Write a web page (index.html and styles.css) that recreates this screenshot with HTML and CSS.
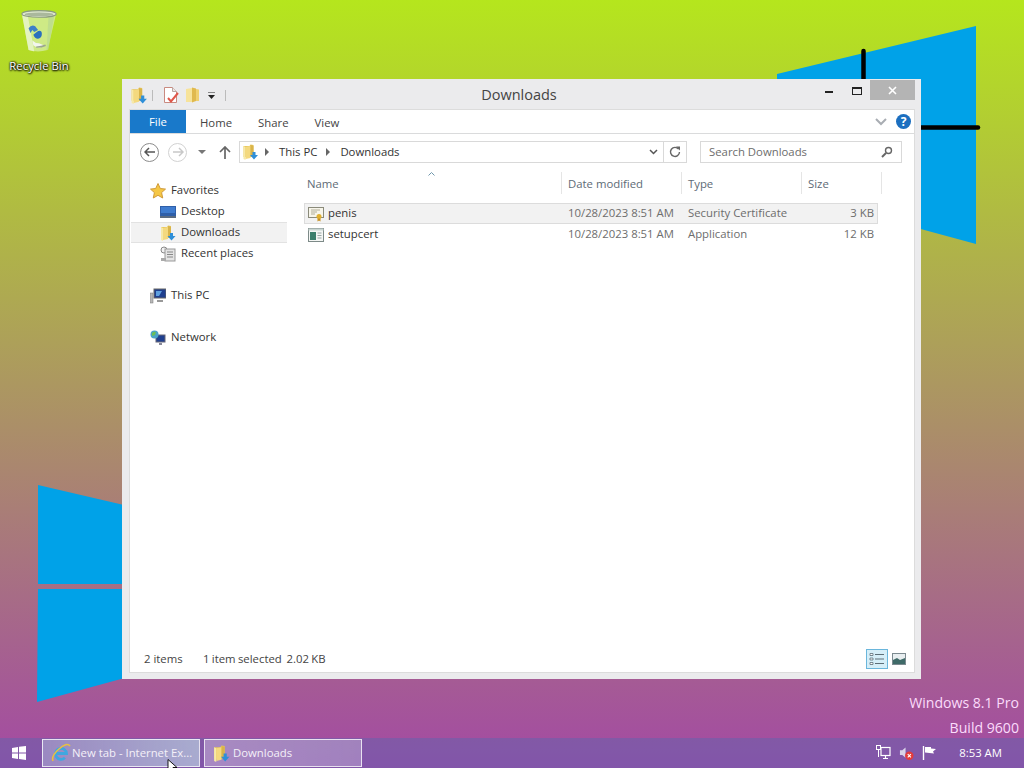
FILE: index.html
```html
<!DOCTYPE html>
<html lang="en">
<head>
    <meta charset="UTF-8">
    <title>Downloads</title>
    <link rel="stylesheet" href="styles.css">
</head>
<body>
    <!-- shared icons -->
    <svg class="defs" width="0" height="0">
        <symbol id="folder-dl" viewBox="0 0 16 18">
            <path d="M1 3h6l1-1.500 3 .5v12l-10 0z" fill="#e8c75c"/>
            <path d="M1 3v13l2 1V4z" fill="#f7e9a8"/>
            <path d="M3 4l5-1v12l-5 1z" fill="#f4d97f"/>
            <path d="M8 2l3 .7V13l-3 1z" fill="#d9b44a"/>
            <path d="M10 9h3v3h2.500l-4 4.500-4-4.500H10z" fill="#2f8fd8"/>
        </symbol>
        <symbol id="folder" viewBox="0 0 16 18">
            <path d="M1 3l6-1v14l-6 0z" fill="#f7e39a"/>
            <path d="M7 1.500l4 1V15l-4 1.500z" fill="#e0b94e"/>
            <path d="M11 3l3 .5V15l-3 0z" fill="#f0d070"/>
        </symbol>
    </svg>

    <div class="desktop">
        <svg class="wallpaper" width="1024" height="738">
            <polygon points="777,74 976,26 976,244 777,190" fill="#00a2e8"/>
            <polygon points="38,485 300,546 300,584 38,584" fill="#00a2e8"/>
            <polygon points="38,589 300,589 300,630 37,702" fill="#00a2e8"/>
            <line x1="863.500" y1="51" x2="863.500" y2="140" stroke="#000" stroke-width="4.500" stroke-linecap="round"/>
            <line x1="800" y1="127.500" x2="978" y2="127.500" stroke="#000" stroke-width="4.500" stroke-linecap="round"/>
        </svg>

        <div class="desk-icon">
            <svg width="38" height="44" viewBox="0 0 40 46">
                <path d="M2 5 9 43q10 3 20 0L38 5z" fill="#d8eeb0" fill-opacity=".7"/>
                <path d="M2 5 9 43q3 1 6 1.500L8 6z" fill="#eef7d8" fill-opacity=".7"/>
                <path d="M30 7 28 43q1 0 2-.5L36 7z" fill="#b8d890" fill-opacity=".7"/>
                <ellipse cx="20" cy="5" rx="18" ry="3.500" fill="#dfe8d0" stroke="#8b9a80" stroke-width="1.200"/>
                <ellipse cx="20" cy="5.500" rx="15" ry="2" fill="#aab89c"/>
                <path d="M9 20q3-4 7-2l3 4-4 2-2-2-2 3z" fill="#3d7fc8"/>
                <path d="M14 27l5-4q4-1 4 3t-3 5q-4 1-6-4z" fill="#2a6fbd"/>
                <path d="M13 33q3 3 7 3l5 2-3 2q-5 1-8-2z" fill="#f2f5ee"/>
                <path d="M17 40q6 0 10-2" stroke="#9aa690" stroke-width="1.500" fill="none"/>
            </svg>
            <span>Recycle Bin</span>
        </div>

        <div class="watermark">
            <div>Windows 8.1 Pro</div>
            <div>Build 9600</div>
        </div>

        <div class="window">
            <div class="titlebar">
                <div class="qat">
                    <svg width="18" height="19"><use href="#folder-dl"/></svg>
                    <span class="qat-sep"></span>
                    <svg width="16" height="18" viewBox="0 0 16 18">
                        <path d="M1.500 1.500h8l4 4v11h-12z" fill="#fff" stroke="#c98a80"/>
                        <path d="M9.500 1.500v4h4" fill="#e8e8e8" stroke="#b9a7a2"/>
                        <path d="M5 12l3 3.500L15 7" stroke="#e0574a" stroke-width="2" fill="none"/>
                    </svg>
                    <svg class="qat-folder" width="16" height="18"><use href="#folder"/></svg>
                    <svg class="qat-drop" width="9" height="8" viewBox="0 0 9 8">
                        <path d="M1 0h7" stroke="#222"/>
                        <path d="M1 3h7L4.500 7z" fill="#222"/>
                    </svg>
                    <span class="qat-sep"></span>
                </div>
                <div class="title">Downloads</div>
                <div class="winbtns">
                    <span class="btn-min"></span>
                    <span class="btn-max"></span>
                    <span class="btn-close">
                        <svg width="9" height="9" viewBox="0 0 9 9">
                            <path d="M1 1l7 7M8 1 1 8" stroke="#fff" stroke-width="1.600"/>
                        </svg>
                    </span>
                </div>
            </div>

            <div class="main">
                <div class="ribbon">
                    <div class="tab-file">File</div>
                    <div class="tab">Home</div>
                    <div class="tab">Share</div>
                    <div class="tab">View</div>
                    <div class="ribbon-end">
                        <svg width="12" height="8" viewBox="0 0 12 8">
                            <path d="M1 1l5 5 5-5" stroke="#a9adb3" stroke-width="2" fill="none"/>
                        </svg>
                        <span class="help">?</span>
                    </div>
                </div>

                <div class="navbar">
                    <span class="round-btn">
                        <svg width="12" height="10" viewBox="0 0 12 10">
                            <path d="M5 1 1 5l4 4M1 5h10" stroke="#555" stroke-width="1.500" fill="none"/>
                        </svg>
                    </span>
                    <span class="round-btn off">
                        <svg width="12" height="10" viewBox="0 0 12 10">
                            <path d="M7 1l4 4-4 4M11 5H1" stroke="#c8c8c8" stroke-width="1.500" fill="none"/>
                        </svg>
                    </span>
                    <svg class="nav-drop" width="8" height="4" viewBox="0 0 8 4">
                        <path d="M0 0h8L4 4z" fill="#777"/>
                    </svg>
                    <svg class="nav-up" width="12" height="13" viewBox="0 0 12 13">
                        <path d="M1 6l5-5 5 5M6 1v12" stroke="#666" stroke-width="1.700" fill="none"/>
                    </svg>
                    <div class="address">
                        <svg class="addr-icon" width="17" height="18"><use href="#folder-dl"/></svg>
                        <span class="crumb-arrow"></span>
                        <span class="crumb">This PC</span>
                        <span class="crumb-arrow"></span>
                        <span class="crumb">Downloads</span>
                        <svg class="addr-chev" width="9" height="6" viewBox="0 0 9 6">
                            <path d="M1 1l3.500 3.500L8 1" stroke="#555" stroke-width="1.500" fill="none"/>
                        </svg>
                        <span class="addr-refresh">
                            <svg width="12" height="12" viewBox="0 0 12 12">
                                <path d="M9.600 3.200A4.500 4.500 0 1 0 10.500 6" stroke="#666" stroke-width="1.400" fill="none"/>
                                <path d="M7 .5h4v4z" fill="#666"/>
                            </svg>
                        </span>
                    </div>
                    <div class="search">
                        <span>Search Downloads</span>
                        <svg width="12" height="12" viewBox="0 0 12 12">
                            <circle cx="7.500" cy="4.500" r="3" stroke="#666" stroke-width="1.400" fill="none"/>
                            <path d="M5 7l-4 4" stroke="#666" stroke-width="2"/>
                        </svg>
                    </div>
                </div>

                <div class="panes">
                    <div class="tree">
                        <div class="tree-row top">
                            <svg width="16" height="16" viewBox="0 0 16 16">
                                <path d="M8 .5l2.300 5 5.200.6-3.900 3.500 1.100 5.400L8 12.300 3.300 15l1.100-5.400L.5 6.100l5.200-.6z" fill="#f5c745" stroke="#d09a3a"/>
                            </svg>
                            <span>Favorites</span>
                        </div>
                        <div class="tree-row sub">
                            <svg width="16" height="14" viewBox="0 0 16 14">
                                <rect x="0" y="1" width="16" height="10" fill="#2f5fa8"/>
                                <rect x="1" y="2" width="14" height="6" fill="#3f7ccf"/>
                                <rect x="0" y="11" width="16" height="2" fill="#5b6b80"/>
                            </svg>
                            <span>Desktop</span>
                        </div>
                        <div class="tree-row sub selected">
                            <svg width="16" height="18"><use href="#folder-dl"/></svg>
                            <span>Downloads</span>
                        </div>
                        <div class="tree-row sub">
                            <svg width="16" height="16" viewBox="0 0 16 16">
                                <circle cx="4" cy="4" r="3" fill="#f1f1f1" stroke="#888"/>
                                <rect x="5" y="3" width="10" height="12" fill="#e4e4e4" stroke="#999"/>
                                <path d="M7 6h6M7 8.500h6M7 11h6" stroke="#888"/>
                                <rect x="1" y="12" width="5" height="3" fill="#aaa"/>
                            </svg>
                            <span>Recent places</span>
                        </div>
                        <div class="tree-row top gap">
                            <svg width="16" height="16" viewBox="0 0 16 16">
                                <rect x="4" y="1" width="12" height="9" fill="#1f3f8f" stroke="#666"/>
                                <path d="M6 3h6l-3 5H6z" fill="#5fa0e0"/>
                                <rect x="0" y="5" width="3" height="10" fill="#b8b8b8" stroke="#777" stroke-width=".5"/>
                                <path d="M7 12h6v2H7z" fill="#999"/>
                            </svg>
                            <span>This PC</span>
                        </div>
                        <div class="tree-row top gap">
                            <svg width="16" height="16" viewBox="0 0 16 16">
                                <rect x="6" y="5" width="9" height="7" fill="#1f3f8f" stroke="#667"/>
                                <circle cx="4.500" cy="4.500" r="4" fill="#4aa3c8"/>
                                <path d="M2 3q2-2 4-1l-1 3-3 1z" fill="#6bbf59"/>
                                <path d="M9 13h3v2H9z" fill="#889"/>
                            </svg>
                            <span>Network</span>
                        </div>
                    </div>

                    <div class="files">
                        <svg class="sort-arrow" width="7" height="4" viewBox="0 0 7 4">
                            <path d="M.5 3.500l3-3 3 3" stroke="#6f97ad" fill="none"/>
                        </svg>
                        <div class="file-head">
                            <div class="col-name">Name</div>
                            <div>Date modified</div>
                            <div>Type</div>
                            <div>Size</div>
                        </div>
                        <div class="file-row selected">
                            <div class="col-name">
                                <svg width="16" height="16" viewBox="0 0 16 16">
                                    <rect x=".5" y="1.500" width="15" height="10" fill="#f7f5ea" stroke="#8a8a7a"/>
                                    <path d="M3 4h9M3 6h6M3 8h4" stroke="#b0ad9a"/>
                                    <circle cx="11" cy="10.500" r="2.500" fill="#e0b030"/>
                                    <path d="M9.500 12.500v3l1.500-1 1.500 1v-3z" fill="#c58f20"/>
                                </svg>
                                <span>penis</span>
                            </div>
                            <div>10/28/2023 8:51 AM</div>
                            <div>Security Certificate</div>
                            <div class="col-size">3 KB</div>
                        </div>
                        <div class="file-row">
                            <div class="col-name">
                                <svg width="16" height="16" viewBox="0 0 16 16">
                                    <rect x=".5" y="1.500" width="15" height="13" fill="#f4f6f4" stroke="#7d8a88"/>
                                    <rect x=".5" y="1.500" width="15" height="2" fill="#c9d6d2"/>
                                    <rect x="2" y="5" width="6" height="8" fill="#3c7f6c"/>
                                    <path d="M9.500 6h4M9.500 8.500h4M9.500 11h4" stroke="#9aa6a4"/>
                                </svg>
                                <span>setupcert</span>
                            </div>
                            <div>10/28/2023 8:51 AM</div>
                            <div>Application</div>
                            <div class="col-size">12 KB</div>
                        </div>
                    </div>
                </div>

                <div class="statusbar">
                    <span class="status-count">2 items</span>
                    <span class="status-sel">1 item selected&nbsp; 2.02 KB</span>
                    <div class="view-btns">
                        <span class="view-btn active">
                            <svg width="16" height="14" viewBox="0 0 16 14">
                                <path d="M1 1.500h3v2H1zM1 6h3v2H1zM1 10.500h3v2H1z" fill="#fff" stroke="#5d6f78" stroke-width=".8"/>
                                <path d="M6 2.500h9M6 7h9M6 11.500h9" stroke="#5d6f78"/>
                            </svg>
                        </span>
                        <span class="view-btn">
                            <svg width="14" height="12" viewBox="0 0 14 12">
                                <rect x=".5" y=".5" width="13" height="11" fill="#e8eef0" stroke="#7c8a90"/>
                                <path d="M1 7l4-2 3 2 5-2v6H1z" fill="#3f6a68"/>
                            </svg>
                        </span>
                    </div>
                </div>
            </div>
        </div>

        <!-- mouse pointer -->
        <svg class="pointer" width="11" height="14" viewBox="0 0 11 14">
            <path d="M1 .5v11l3-2.500 2 4.500 2-1-2-4h4z" fill="#fff" stroke="#000" stroke-width=".9"/>
        </svg>
    </div>

    <div class="taskbar">
        <div class="start">
            <svg width="14" height="14" viewBox="0 0 14 14">
                <path d="M0 2l6-1v5.500H0zM7 .8 14 0v6.500H7zM0 7.500h6V13l-6-1zM7 7.500h7V14l-7-1z" fill="#fff"/>
            </svg>
        </div>
        <div class="task-btn hot">
            <svg width="20" height="20" viewBox="0 0 20 20">
                <path d="M5 10.500h10.500a5.500 5.500 0 1 0-1.600 4.200" fill="none" stroke="#3fa7e0" stroke-width="2.800"/>
                <path d="M2 18Q0 13 8 6t11-3" fill="none" stroke="#e8c040" stroke-width="1.600"/>
            </svg>
            <span>New tab - Internet Ex...</span>
        </div>
        <div class="task-btn">
            <svg width="17" height="19"><use href="#folder-dl"/></svg>
            <span>Downloads</span>
        </div>
        <div class="tray">
            <svg width="15" height="16" viewBox="0 0 15 16">
                <rect x="5" y="2.500" width="9" height="8" fill="none" stroke="#fff" stroke-width="1.200"/>
                <path d="M7 13.500h5M9.500 11v2" stroke="#fff" stroke-width="1.200"/>
                <rect x=".5" y=".5" width="4" height="4" fill="none" stroke="#fff"/>
                <path d="M2.500 4.500V12" stroke="#fff"/>
            </svg>
            <svg width="15" height="16" viewBox="0 0 16 16">
                <path d="M1 5h2.500L7 2v11L3.500 10H1z" fill="#d8d2e8"/>
                <circle cx="11" cy="11" r="4.500" fill="#e33b3b"/>
                <path d="M9.300 9.300l3.400 3.400M12.700 9.300l-3.400 3.400" stroke="#fff" stroke-width="1.200"/>
            </svg>
            <svg width="15" height="16" viewBox="0 0 15 16">
                <path d="M1.500 1v14" stroke="#fff" stroke-width="1.400"/>
                <path d="M3 2h6v1.500l5 .5-3 2.500 1 2-9-1z" fill="#fff"/>
            </svg>
            <span class="clock">8:53 AM</span>
        </div>
    </div>
</body>
</html>
```

FILE: styles.css
```css
html, body {
    margin: 0;
    padding: 0;
}

body {
    width: 1024px;
    height: 768px;
    overflow: hidden;
    display: flex;
    flex-direction: column;
    background: linear-gradient(to bottom, #b5e61d, #a349a4);
    font-family: "Open Sans", "Noto Sans", sans-serif;
    font-size: 11.35px;
    color: #444;
}

svg {
    display: block;
    flex: none;
}

.defs {
    position: absolute;
}

/* Desktop */
.desktop {
    position: relative;
    flex: 1;
}

.wallpaper {
    position: absolute;
    left: 0;
    top: 0;
}

.desk-icon {
    position: absolute;
    left: 0;
    top: 9px;
    width: 78px;
    display: flex;
    flex-direction: column;
    align-items: center;
    color: #fff;
    text-shadow: 0 0 2px #000, 0 1px 2px #000, 1px 0 2px #000;
}

.desk-icon span {
    margin-top: 5px;
    line-height: 16px;
}

.watermark {
    position: absolute;
    right: 5px;
    top: 690px;
    text-align: right;
    font-size: 14.1px;
    line-height: 25px;
    color: #fbdcfb;
}

.pointer {
    position: absolute;
    left: 167px;
    top: 759px;
    z-index: 3;
}

/* Window */
.window {
    position: absolute;
    left: 122px;
    top: 79px;
    width: 799px;
    height: 600px;
    box-sizing: border-box;
    padding: 0 7px 7px 8px;
    display: flex;
    flex-direction: column;
    background: #ebebed;
}

.titlebar {
    position: relative;
    height: 31px;
    display: flex;
    align-items: center;
    justify-content: center;
    flex: none;
}

.qat {
    position: absolute;
    left: 0;
    top: 6px;
    display: flex;
    align-items: center;
    height: 20px;
}

.qat-sep {
    width: 1px;
    height: 11px;
    background: #bbb;
    margin: 0 10px 0 4px;
}

.qat-folder {
    margin-left: 6px;
}

.qat-drop {
    margin: 2px 6px 0 6px;
}

.qat .qat-sep:last-child {
    margin: 0;
    margin-left: 3px;
}

.title {
    font-size: 14.500px;
    color: #444;
    margin-top: -1px;
    padding-right: 6px;
}

.winbtns {
    position: absolute;
    right: -1px;
    top: 1px;
    display: flex;
    align-items: flex-start;
}

.btn-min {
    width: 8px;
    height: 2px;
    background: #222;
    margin: 11px 19px 0 0;
}

.btn-max {
    box-sizing: border-box;
    width: 10px;
    height: 8px;
    border: 1px solid #222;
    border-top-width: 2px;
    margin: 7px 8px 0 0;
}

.btn-close {
    width: 45px;
    height: 20px;
    background: #b4b4b4;
    display: flex;
    align-items: center;
    justify-content: center;
}

.main {
    flex: 1;
    display: flex;
    flex-direction: column;
    background: #fff;
    min-height: 0;
    box-shadow: 0 0 0 1px #dcdcdc;
}

/* Ribbon */
.ribbon {
    height: 24px;
    box-sizing: border-box;
    display: flex;
    border-bottom: 1px solid #dadbdc;
    flex: none;
}

.tab-file {
    width: 56px;
    background: #1979ca;
    color: #fff;
    text-align: center;
    line-height: 23px;
    height: 23px;
    margin-right: 1px;
}

.tab {
    padding: 0 13px;
    line-height: 25px;
    color: #444;
}

.ribbon-end {
    margin-left: auto;
    display: flex;
    align-items: center;
    gap: 9px;
    padding-right: 3px;
}

.help {
    width: 15px;
    height: 15px;
    border-radius: 50%;
    background: #1c6fc0;
    color: #fff;
    font-weight: bold;
    text-align: center;
    line-height: 15px;
    font-size: 12px;
}

/* Navigation bar */
.navbar {
    height: 36px;
    flex: none;
    display: flex;
    align-items: center;
    padding-left: 10px;
    box-sizing: border-box;
}

.round-btn {
    box-sizing: border-box;
    width: 19px;
    height: 19px;
    border: 1.500px solid #8c8c8c;
    border-radius: 50%;
    display: flex;
    align-items: center;
    justify-content: center;
    margin-right: 9px;
}

.round-btn.off {
    border-color: #d2d2d2;
}

.nav-drop {
    margin: 0 0 0 2px;
}

.nav-up {
    margin-left: 13px;
}

.address {
    width: 448px;
    height: 22px;
    margin-left: 8px;
    box-sizing: border-box;
    border: 1px solid #d9d9d9;
    display: flex;
    align-items: center;
    padding-left: 2px;
    color: #333;
}

.addr-icon {
    margin-right: 6px;
}

.crumb-arrow {
    width: 0;
    height: 0;
    border-left: 4px solid #666;
    border-top: 4px solid transparent;
    border-bottom: 4px solid transparent;
    margin-right: 10px;
}

.crumb {
    margin-right: 9px;
    padding-bottom: 2px;
}

.addr-chev {
    margin-left: auto;
    margin-right: 5px;
}

.addr-refresh {
    width: 22px;
    height: 20px;
    border-left: 1px solid #d9d9d9;
    display: flex;
    align-items: center;
    justify-content: center;
}

.search {
    width: 202px;
    height: 22px;
    margin-left: 13px;
    box-sizing: border-box;
    border: 1px solid #d9d9d9;
    display: flex;
    align-items: center;
    justify-content: space-between;
    padding: 0 8px;
    color: #6d6d6d;
}

.search span {
    padding-bottom: 2px;
}

/* Panes */
.panes {
    flex: 1;
    display: flex;
    min-height: 0;
}

.tree {
    width: 170px;
    flex: none;
    padding-top: 10px;
    box-sizing: border-box;
}

.tree-row {
    height: 21px;
    width: 156px;
    box-sizing: border-box;
    margin-left: 1px;
    display: flex;
    align-items: center;
    gap: 5px;
    color: #333;
}

.tree-row span {
    padding-bottom: 2px;
}

.tree-row.top {
    padding-left: 19px;
}

.tree-row.sub {
    padding-left: 29px;
}

.tree-row.gap {
    margin-top: 21px;
}

.tree-row.selected {
    background: #f2f2f2;
    box-shadow: inset 0 1px #e2e2e2, inset 0 -1px #e2e2e2;
}

.files {
    position: relative;
    flex: 1;
    padding: 2px 0 0 4px;
}

.sort-arrow {
    position: absolute;
    left: 128px;
    top: 2px;
}

.file-head, .file-row {
    display: grid;
    align-items: center;
}

.file-head {
    grid-template-columns: 258px 120px 120px 80px;
    height: 22px;
    margin-bottom: 9px;
    color: #5e6b76;
}

.file-head > div {
    border-right: 1px solid #e5e5e5;
    height: 22px;
    line-height: 24px;
    padding-left: 6px;
    box-sizing: border-box;
}

.file-head .col-name {
    padding-left: 3px;
}

.file-row {
    grid-template-columns: 258px 120px 120px 76px;
    height: 21px;
    box-sizing: border-box;
    width: 574px;
    color: #6d6d6d;
}

.file-row.selected {
    background: #f2f2f2;
    box-shadow: inset 0 0 0 1px #dcdcdc;
}

.file-row > div {
    padding-left: 6px;
    padding-bottom: 2px;
    white-space: nowrap;
}

.file-row .col-name {
    display: flex;
    align-items: center;
    gap: 4px;
    padding-left: 4px;
    padding-bottom: 0;
    color: #333;
}

.file-row .col-name span {
    padding-bottom: 2px;
}

.file-row .col-size {
    text-align: right;
    padding: 0 4px 2px 0;
}

/* Status bar */
.statusbar {
    height: 26px;
    flex: none;
    display: flex;
    align-items: center;
    padding-left: 14px;
    color: #444;
}

.status-count {
    width: 59px;
    padding-bottom: 2px;
}

.status-sel {
    padding-bottom: 2px;
    word-spacing: -0.6px;
}

.view-btns {
    margin-left: auto;
    display: flex;
    align-items: center;
    margin-right: 4px;
}

.view-btn {
    width: 22px;
    height: 20px;
    box-sizing: border-box;
    display: flex;
    align-items: center;
    justify-content: center;
}

.view-btn.active {
    background: #d5eef8;
    border: 1px solid #6ab6dc;
}

/* Taskbar */
.taskbar {
    height: 30px;
    flex: none;
    display: flex;
    align-items: center;
    background: rgba(70, 110, 180, 0.35);
    color: #fff;
}

.start {
    width: 42px;
    display: flex;
    justify-content: center;
    padding-right: 4px;
    box-sizing: border-box;
}

.task-btn {
    box-sizing: border-box;
    width: 158px;
    height: 28px;
    margin-right: 4px;
    border: 1px solid rgba(255, 255, 255, 0.75);
    background: linear-gradient(to right, rgba(255, 255, 255, 0.3), rgba(255, 255, 255, 0.25));
    display: flex;
    align-items: center;
    gap: 3px;
    padding-left: 8px;
    color: #f4f0f8;
    white-space: nowrap;
}

.task-btn span {
    padding-bottom: 2px;
}

.task-btn.hot {
    background: linear-gradient(to right, rgba(200, 230, 240, 0.35), rgba(200, 240, 240, 0.55));
    gap: 1px;
}

.tray {
    margin-left: auto;
    display: flex;
    align-items: center;
    gap: 8px;
    padding-right: 22px;
}

.clock {
    margin-left: 14px;
    padding-bottom: 2px;
}
```
